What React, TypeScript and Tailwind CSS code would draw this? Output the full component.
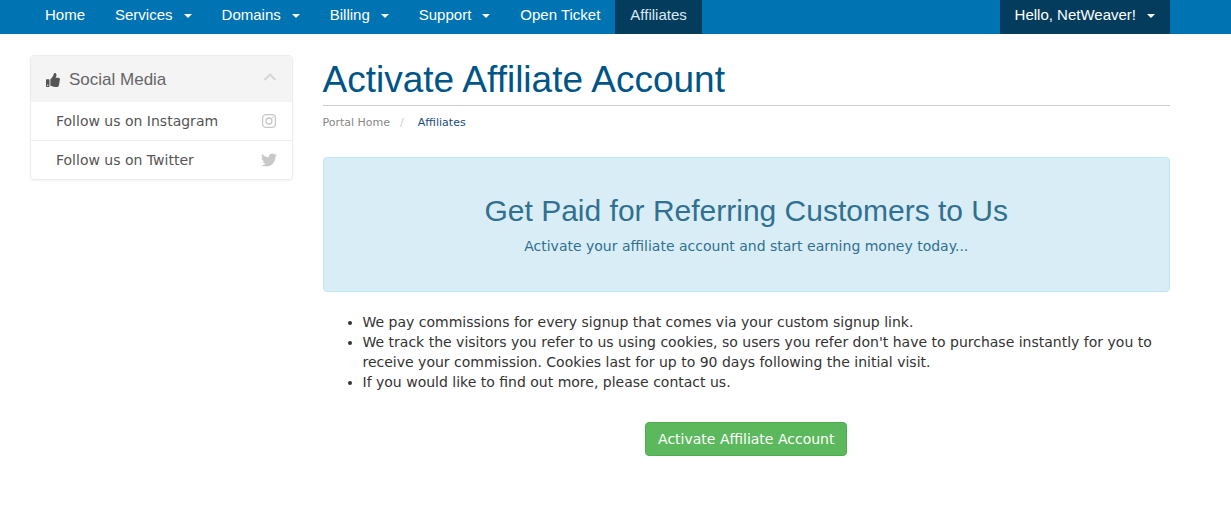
import { FaThumbsUp, FaTwitter } from 'react-icons/fa'

interface NavItem {
  label: string
  dropdown?: boolean
  active?: boolean
}

const navItems: NavItem[] = [
  { label: 'Home' },
  { label: 'Services', dropdown: true },
  { label: 'Domains', dropdown: true },
  { label: 'Billing', dropdown: true },
  { label: 'Support', dropdown: true },
  { label: 'Open Ticket' },
  { label: 'Affiliates', active: true },
]

const socialLinks = [
  { label: 'Follow us on Instagram', icon: <InstagramIcon /> },
  { label: 'Follow us on Twitter', icon: <FaTwitter className="w-4 h-4" /> },
]

const perks = [
  'We pay commissions for every signup that comes via your custom signup link.',
  "We track the visitors you refer to us using cookies, so users you refer don't have to purchase instantly for you to receive your commission. Cookies last for up to 90 days following the initial visit.",
  'If you would like to find out more, please contact us.',
]

function InstagramIcon() {
  return (
    <svg viewBox="0 0 16 16" className="w-4 h-4" fill="none" stroke="currentColor" strokeWidth="1.3">
      <rect x="1.6" y="1.6" width="12.8" height="12.8" rx="3.4" />
      <circle cx="8" cy="8" r="3" />
      <circle cx="11.8" cy="4.3" r="0.8" fill="currentColor" stroke="none" />
    </svg>
  )
}

function ChevronIcon() {
  return (
    <svg viewBox="0 0 14 14" className="w-[14px] h-[14px]" fill="none" stroke="currentColor" strokeWidth="2.2">
      <path d="M1.5 10 L7 4.5 L12.5 10" />
    </svg>
  )
}

function Caret() {
  return <span className="mt-[2px] ml-[11px] border-x-4 border-t-4 border-x-transparent border-t-current" />
}

function NavLink({ label, dropdown, active }: NavItem) {
  return (
    <a
      href="#"
      className={`flex items-center px-[15px] pt-[5px] pb-[9px] leading-5 ${
        active ? 'bg-[#043c5e] text-[#d9e8f2]' : 'text-white'
      }`}
    >
      {label}
      {dropdown && <Caret />}
    </a>
  )
}

function Navbar() {
  return (
    <nav className="bg-[#0073b2] font-['Liberation_Sans',Arial,sans-serif] text-[15px]">
      <div className="ml-[15px] flex max-w-[1170px] justify-between px-[15px]">
        <div className="flex">
          {navItems.map((item) => (
            <NavLink key={item.label} {...item} />
          ))}
        </div>
        <a href="#" className="flex items-center bg-[#043c5e] px-[15px] pt-[5px] pb-[9px] leading-5 text-white">
          Hello, NetWeaver!
          <Caret />
        </a>
      </div>
    </nav>
  )
}

function SocialPanel() {
  return (
    <aside className="w-1/4 px-[15px]">
      <div className="overflow-hidden rounded border border-[#ececec] shadow-xs">
        <div className="flex items-center bg-[#f4f4f4] px-[15px] pt-[13px] pb-[11px] text-[#555]">
          <FaThumbsUp className="h-[14px] w-[14px]" />
          <h3 className="ml-[9px] flex-1 font-['Liberation_Sans',Arial,sans-serif] text-[17px] leading-[22px] text-[#666]">
            Social Media
          </h3>
          <button type="button" aria-label="Collapse" className="-mt-[6px] text-[#d8d8d8]">
            <ChevronIcon />
          </button>
        </div>
        {socialLinks.map(({ label, icon }) => (
          <a
            key={label}
            href="#"
            className="flex items-center justify-between border-b border-[#eee] py-[9px] pr-[15px] pl-[25px] leading-5 text-[#555] last:border-b-0"
          >
            {label}
            <span className="text-[#c8c8c8]">{icon}</span>
          </a>
        ))}
      </div>
    </aside>
  )
}

export default function App() {
  return (
    <div className="min-h-screen bg-white font-['DejaVu_Sans',Verdana,sans-serif] text-sm leading-5 text-[#333]">
      <Navbar />
      <div className="ml-[15px] flex max-w-[1170px] pt-[21px]">
        <SocialPanel />
        <main className="w-3/4 px-[15px]">
          <h1 className="border-b border-[#ccc] pt-[2px] pb-[3px] font-['Liberation_Sans',Arial,sans-serif] text-[37px] leading-[45px] text-[#005587]">
            Activate Affiliate Account
          </h1>
          <ol className="flex py-[9px] text-[11px] leading-4">
            <li>
              <a href="#" className="text-[#888]">Portal Home</a>
            </li>
            <li className="px-[10px] text-[#ccc]">/</li>
            <li className="pl-1 text-[#1a4d80]">Affiliates</li>
          </ol>
          <section className="mt-[17px] rounded border border-[#bce8f1] bg-[#d9edf7] px-[15px] pt-[35px] pb-[35px] text-center text-[#31708f]">
            <h2 className="font-['Liberation_Sans',Arial,sans-serif] text-3xl leading-9">
              Get Paid for Referring Customers to Us
            </h2>
            <p className="mt-[7px]">Activate your affiliate account and start earning money today...</p>
          </section>
          <ul className="mt-5 list-disc pl-10">
            {perks.map((perk) => (
              <li key={perk}>{perk}</li>
            ))}
          </ul>
          <div className="mt-[30px] text-center">
            <button
              type="button"
              className="rounded border border-[#4cae4c] bg-[#5cb85c] px-3 py-[6px] text-white"
            >
              Activate Affiliate Account
            </button>
          </div>
        </main>
      </div>
    </div>
  )
}
